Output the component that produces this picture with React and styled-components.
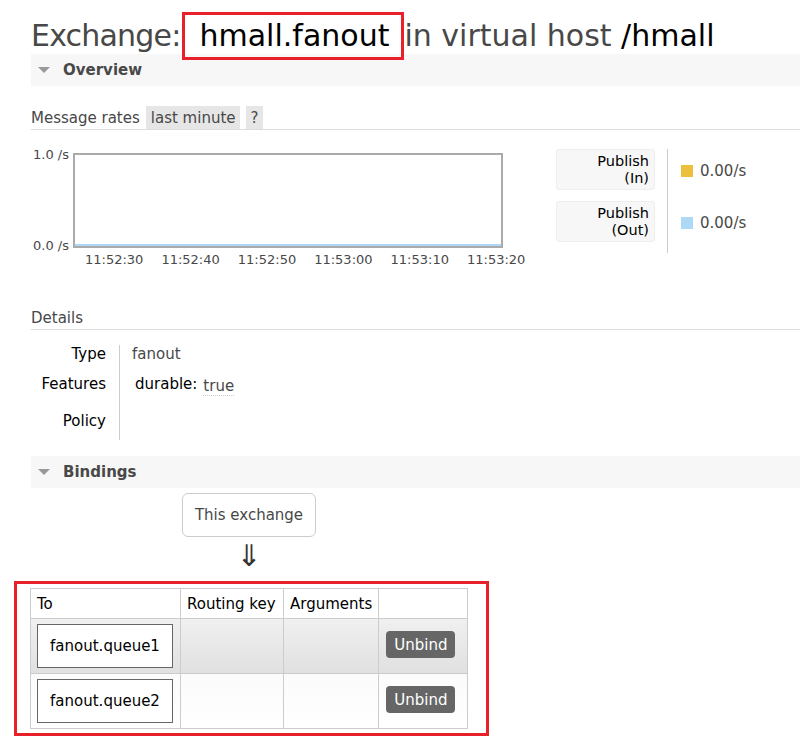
import React from "react";
import styled, { createGlobalStyle } from "styled-components";

const GlobalStyle = createGlobalStyle`
  html, body {
    margin: 0;
    padding: 0;
    background: #fff;
  }
  body {
    font-family: "DejaVu Sans", Verdana, sans-serif;
    color: #484848;
    overflow: hidden;
  }
`;

const Page = styled.div`
  width: 800px;
  height: 741px;
  padding: 12px 0 0 31px;
  box-sizing: border-box;
  overflow: hidden;
`;

const Title = styled.h1`
  margin: 0;
  font-size: 30px;
  font-weight: normal;
  color: #484848;
  line-height: 48px;
  white-space: nowrap;
  height: 42px;
`;

const Lead = styled.span`
  letter-spacing: -0.8px;
`;

const Marked = styled.span`
  display: inline-block;
  border: 3px solid #e8202a;
  padding: 0 12px 0 15px;
  margin-left: 1px;
  line-height: 42px;
  height: 42px;
  vertical-align: top;
  color: #000;
  position: relative;
  z-index: 1;
`;

const Dark = styled.span`
  color: #000;
`;

const SectionBar = styled.div`
  display: flex;
  align-items: center;
  gap: 13px;
  height: 32px;
  padding-left: 7px;
  background: #f7f7f7;
  font-size: 15px;
  font-weight: bold;
  color: #484848;
  margin-top: ${(p) => p.$top || 0}px;
`;

const Triangle = styled.span`
  width: 0;
  height: 0;
  border-left: 6px solid transparent;
  border-right: 6px solid transparent;
  border-top: 6px solid #999;
`;

const SubHead = styled.div`
  display: flex;
  align-items: flex-end;
  gap: 6px;
  border-bottom: 1px solid #ddd;
  font-size: 15px;
  margin-top: ${(p) => p.$top || 0}px;
  height: 24px;
`;

const SubTitle = styled.span`
  padding-bottom: 2px;
`;

const Chip = styled.span`
  background: #e6e6e6;
  padding: 3px 4px 2px 5px;
  line-height: 18px;
`;

const RatesRow = styled.div`
  display: flex;
  margin-top: 15px;
  height: 134px;
`;

const Chart = styled.div`
  display: grid;
  grid-template-columns: 42px 430px;
  grid-template-rows: 95px 24px;
  margin-top: 8px;
`;

const YAxis = styled.div`
  display: flex;
  flex-direction: column;
  justify-content: space-between;
  font-size: 13px;
  padding: 0 0 0 2px;
  margin-top: -6px;
  margin-bottom: -5px;
`;

const Plot = styled.div`
  border: 2px solid #aaa;
  box-sizing: border-box;
  display: flex;
  align-items: flex-end;
`;

const Series = styled.div`
  height: 2px;
  width: 100%;
  background: #add8f6;
`;

const XAxis = styled.div`
  grid-column: 2;
  display: flex;
  font-size: 13px;
  padding: 4px 0 0 12px;
  gap: 18px;
  white-space: nowrap;
`;

const Legend = styled.div`
  display: flex;
  margin-left: 53px;
  margin-top: 4px;
  height: 104px;
`;

const LegendLabels = styled.div`
  display: flex;
  flex-direction: column;
  gap: 11px;
  padding-right: 12px;
  border-right: 1px solid #ccc;
`;

const LegendBox = styled.div`
  width: 99px;
  height: 41px;
  box-sizing: border-box;
  background: #f7f7f7;
  border: 1px solid #eee;
  border-radius: 3px;
  text-align: right;
  font-size: 14.5px;
  line-height: 16.5px;
  color: #000;
  padding: 3px 5px 0 0;
`;

const LegendLine = styled.div`
  white-space: nowrap;
`;

const LegendValues = styled.div`
  display: flex;
  flex-direction: column;
  gap: 34px;
  padding: 13px 0 0 13px;
`;

const LegendValue = styled.div`
  display: flex;
  align-items: center;
  gap: 7px;
  font-size: 15px;
  line-height: 18px;
`;

const Swatch = styled.span`
  width: 12px;
  height: 12px;
  background: ${(p) => p.$color};
`;

const DetailsTable = styled.div`
  display: grid;
  grid-template-columns: 89px 1fr;
  margin-top: 15px;
  font-size: 15px;
`;

const Labels = styled.div`
  display: flex;
  flex-direction: column;
  align-items: flex-end;
  padding: 0 13px 0 0;
  color: #000;
  border-right: 1px solid #ccc;
  height: 95px;
`;

const Values = styled.div`
  display: flex;
  flex-direction: column;
  padding-left: 12px;
`;

const Cell = styled.div`
  height: ${(p) => p.$h}px;
  line-height: 18px;
  box-sizing: border-box;
`;

const Key = styled.span`
  color: #000;
  margin-left: 3px;
`;

const Dotted = styled.span`
  border-bottom: 1px dotted #ccc;
  margin-left: 6px;
  position: relative;
  top: 2px;
`;

const Flow = styled.div`
  display: flex;
  flex-direction: column;
  align-items: flex-start;
  margin-left: 151px;
  margin-top: 5px;
`;

const ExchangeBox = styled.div`
  width: 134px;
  height: 44px;
  box-sizing: border-box;
  border: 1px solid #ccc;
  border-radius: 6px;
  display: flex;
  align-items: center;
  justify-content: center;
  font-size: 15px;
`;

const Arrow = styled.div`
  width: 134px;
  text-align: center;
  font-size: 30px;
  color: #333;
  line-height: 38px;
  height: 44px;
`;

const Annotated = styled.div`
  margin-left: -17px;
  width: 475px;
  height: 155px;
  box-sizing: border-box;
  border: 3px solid #e8202a;
  padding: 4px 0 0 13px;
`;

const Table = styled.table`
  border-collapse: collapse;
  font-size: 15px;
  color: #000;
`;

const Th = styled.th`
  border: 1px solid #ccc;
  font-weight: normal;
  text-align: left;
  height: 30px;
  padding: 0 6px;
  width: ${(p) => p.$w}px;
  box-sizing: border-box;
  white-space: nowrap;
`;

const Row = styled.tr`
  background: ${(p) =>
    p.$alt
      ? "linear-gradient(#fbfbfb, #ffffff)"
      : "linear-gradient(#f0f0f0, #e0e0e0)"};
`;

const Td = styled.td`
  border: 1px solid #ccc;
  height: 55px;
  padding: 0 6px;
  box-sizing: border-box;
`;

const QueueBox = styled.div`
  width: 136px;
  height: 44px;
  box-sizing: border-box;
  border: 1px solid #666;
  background: #fff;
  display: flex;
  align-items: center;
  justify-content: center;
`;

const Button = styled.button`
  background: #666;
  color: #fff;
  border: none;
  border-radius: 4px;
  font-family: "DejaVu Sans", Verdana, sans-serif;
  font-size: 15px;
  padding: 0 8px;
  height: 27px;
  margin: 0 0 3px 1px;
`;

const times = ["11:52:30", "11:52:40", "11:52:50", "11:53:00", "11:53:10", "11:53:20"];

const bindings = ["fanout.queue1", "fanout.queue2"];

export default function App() {
  return (
    <Page>
      <GlobalStyle />
      <Title>
        <Lead>Exchange:</Lead>
        <Marked>hmall.fanout</Marked>in virtual host <Dark>/hmall</Dark>
      </Title>

      <SectionBar>
        <Triangle />
        Overview
      </SectionBar>

      <SubHead $top={19}>
        <SubTitle>Message rates</SubTitle>
        <Chip>last minute</Chip>
        <Chip>?</Chip>
      </SubHead>

      <RatesRow>
        <Chart>
          <YAxis>
            <span>1.0 /s</span>
            <span>0.0 /s</span>
          </YAxis>
          <Plot>
            <Series />
          </Plot>
          <XAxis>
            {times.map((t) => (
              <span key={t}>{t}</span>
            ))}
          </XAxis>
        </Chart>

        <Legend>
          <LegendLabels>
            <LegendBox>
              <LegendLine>Publish</LegendLine>
              <LegendLine>(In)</LegendLine>
            </LegendBox>
            <LegendBox>
              <LegendLine>Publish</LegendLine>
              <LegendLine>(Out)</LegendLine>
            </LegendBox>
          </LegendLabels>
          <LegendValues>
            <LegendValue>
              <Swatch $color="#ebc03f" />
              0.00/s
            </LegendValue>
            <LegendValue>
              <Swatch $color="#add8f6" />
              0.00/s
            </LegendValue>
          </LegendValues>
        </Legend>
      </RatesRow>

      <SubHead $top={26}>
        <SubTitle>Details</SubTitle>
      </SubHead>

      <DetailsTable>
        <Labels>
          <Cell $h={30}>Type</Cell>
          <Cell $h={37}>Features</Cell>
          <Cell $h={28}>Policy</Cell>
        </Labels>
        <Values>
          <Cell $h={30}>fanout</Cell>
          <Cell $h={37}>
            <Key>durable:</Key>
            <Dotted>true</Dotted>
          </Cell>
        </Values>
      </DetailsTable>

      <SectionBar $top={16}>
        <Triangle />
        Bindings
      </SectionBar>

      <Flow>
        <ExchangeBox>This exchange</ExchangeBox>
        <Arrow>⇓</Arrow>
      </Flow>

      <Annotated>
        <Table>
          <thead>
            <tr>
              <Th $w={150}>To</Th>
              <Th $w={103}>Routing key</Th>
              <Th $w={95}>Arguments</Th>
              <Th $w={89}></Th>
            </tr>
          </thead>
          <tbody>
            {bindings.map((q, i) => (
              <Row key={q} $alt={i % 2 === 1}>
                <Td>
                  <QueueBox>{q}</QueueBox>
                </Td>
                <Td />
                <Td />
                <Td>
                  <Button>Unbind</Button>
                </Td>
              </Row>
            ))}
          </tbody>
        </Table>
      </Annotated>
    </Page>
  );
}
